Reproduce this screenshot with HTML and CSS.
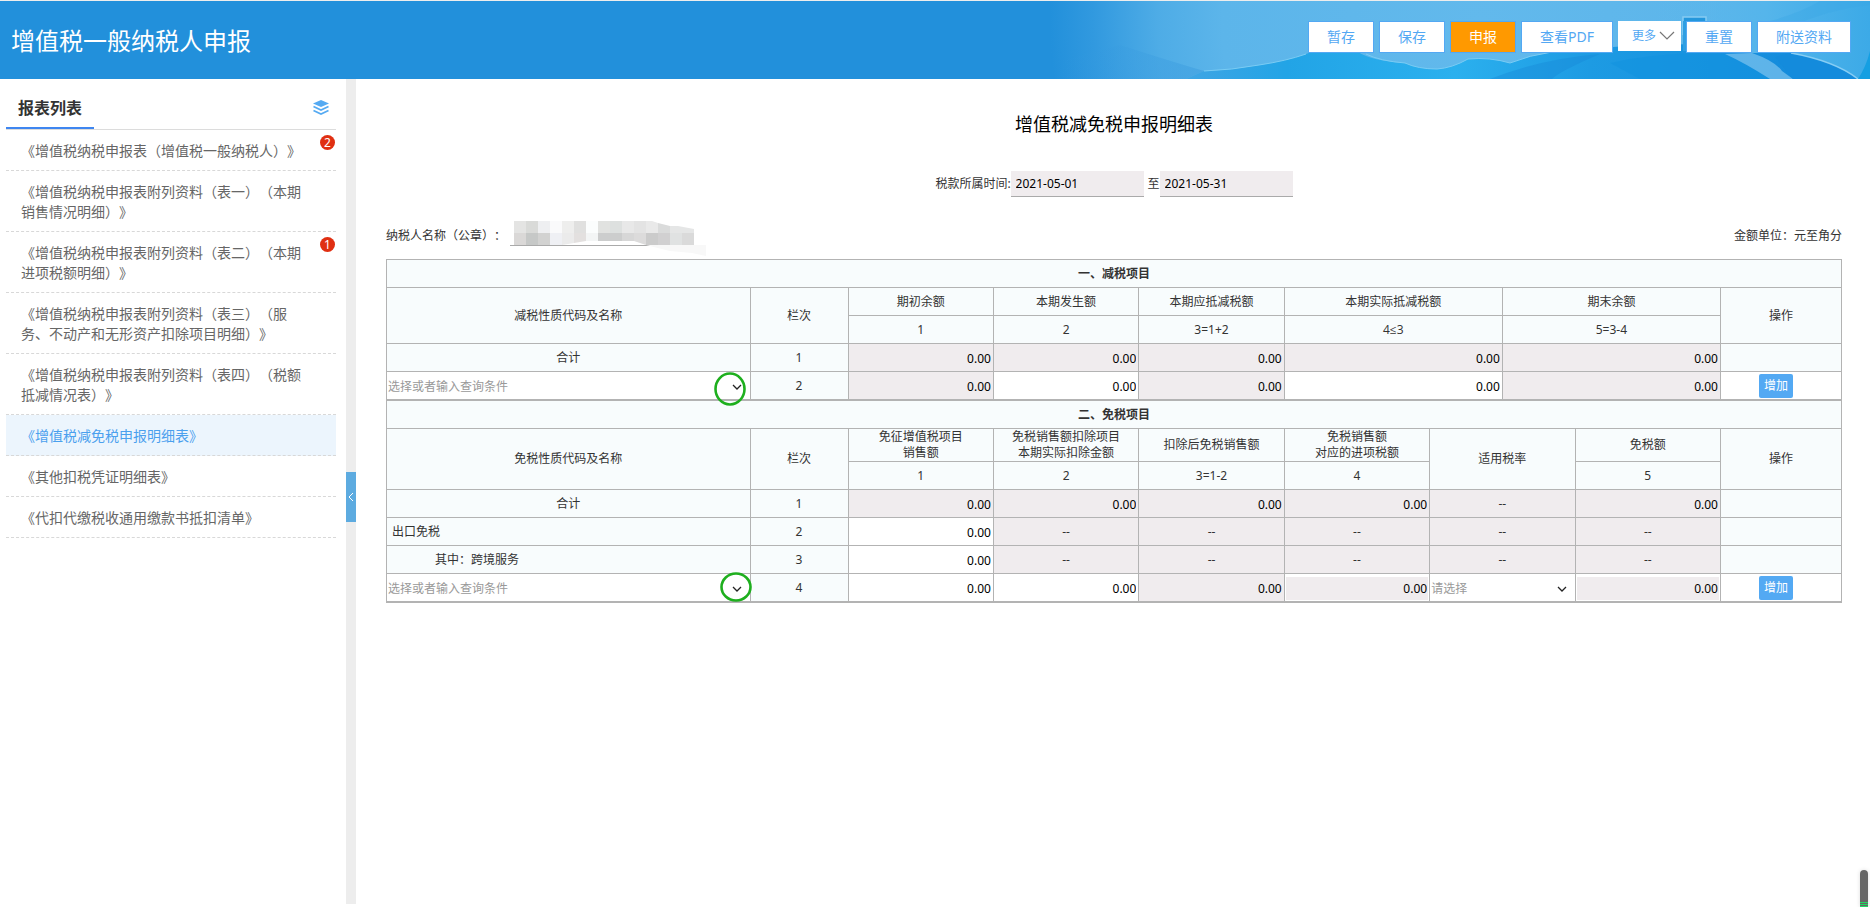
FILE: index.html
```html
<!DOCTYPE html>
<html lang="zh-CN">
<head>
<meta charset="utf-8">
<title>增值税一般纳税人申报</title>
<link rel="stylesheet" href="styles.css">
</head>
<body>
<header class="topbar">
  <svg class="topbar-art" viewBox="0 0 870 78" aria-hidden="true">
    <defs>
      <radialGradient id="sky" gradientUnits="userSpaceOnUse" cx="480" cy="20" r="430">
        <stop offset="0" stop-color="#62b9ec"/>
        <stop offset="0.6" stop-color="#5cb5ea"/>
        <stop offset="0.75" stop-color="#4eace6"/>
        <stop offset="0.9" stop-color="#3199df"/>
        <stop offset="1" stop-color="#2290db"/>
      </radialGradient>
      <linearGradient id="east" x1="0" x2="1" y1="0" y2="0">
        <stop offset="0.75" stop-color="#5cb8ec" stop-opacity="0"/>
        <stop offset="0.88" stop-color="#55b5eb"/>
        <stop offset="1" stop-color="#3caae7"/>
      </linearGradient>
      <linearGradient id="sea" x1="0" x2="1" y1="0" y2="0">
        <stop offset="0" stop-color="#3fa5e4"/>
        <stop offset="0.15" stop-color="#22a4e6"/>
        <stop offset="0.4" stop-color="#2bb0ee"/>
        <stop offset="0.6" stop-color="#1d9be3"/>
        <stop offset="1" stop-color="#1287da"/>
      </linearGradient>
      <linearGradient id="slope" x1="0" x2="1" y1="0" y2="0">
        <stop offset="0" stop-color="#3197de" stop-opacity="0"/>
        <stop offset="1" stop-color="#3f9fe0"/>
      </linearGradient>
    </defs>
    <rect width="870" height="78" fill="url(#sky)"/>
    <rect width="870" height="78" fill="url(#east)"/>
    <path d="M120 44 Q170 60 204 70 L186 78 H60 V60Z" fill="url(#slope)" opacity=".6"/>
    <path d="M186 78 L204 70 Q232 69 259 64 Q286 60 306 53 Q330 42 358 51 Q372 60 405 62 Q418 68 437 68 Q452 67 468 58 Q490 56 510 62 Q530 54 560 50 L640 44 Q700 40 740 52 L791 52 Q830 60 858 78Z" fill="url(#sea)"/>
    <path d="M204 70 Q232 69 259 64 Q286 60 306 53 M366 53 Q380 60 405 62 Q418 68 437 68 Q452 67 468 58 Q490 56 510 62 Q530 54 552 51" fill="none" stroke="#7accf4" stroke-width="1"/>
    <path d="M490 78 Q540 58 600 53 Q560 70 552 78Z" fill="#1687d8" opacity=".4"/>
    <path d="M610 62 Q660 50 725 53 Q750 64 770 78 H640Z" fill="#1392e0" opacity=".6"/>
    <path d="M725 53 L752 52 Q775 60 782 70 L793 78 H770 Q745 62 725 53Z" fill="#8fcdf2" opacity=".6"/>
    <path d="M791 52 Q835 60 858 78 H793 L775 56Z" fill="#148bdc"/>
    <path d="M791 52 Q835 60 858 78" fill="none" stroke="#86cdf4" stroke-width="1.5"/>
    <path d="M683 34 V16 H706 V24" fill="#2497dc" stroke="#86cbf2" stroke-width="1.5"/>
    <path d="M683 50 V20 H706 L700 50Z" fill="#2f9fe2"/>
    <path d="M790 26 Q830 8 870 4 V0 H820 Q800 12 770 20Z" fill="#3aa6e6" opacity=".35"/>
    <path d="M858 78 Q866 66 870 50 V78Z" fill="#159fe2"/>
  </svg>
  <h1 class="topbar-title">增值税一般纳税人申报</h1>
  <div class="actions">
    <button class="btn" type="button">暂存</button>
    <button class="btn" type="button">保存</button>
    <button class="btn btn-primary" type="button">申报</button>
    <button class="btn" type="button">查看PDF</button>
    <button class="btn-more" type="button">更多<svg width="16" height="10" viewBox="0 0 16 10" aria-hidden="true"><path d="M1 1 L8 8 L15 1" fill="none" stroke="#777" stroke-width="1.2"/></svg></button>
    <button class="btn" type="button">重置</button>
    <button class="btn" type="button">附送资料</button>
  </div>
</header>

<div class="page">
  <aside class="sidebar">
    <div class="side-head">
      <h2 class="side-title">报表列表</h2>
      <svg class="layers" width="16" height="16" viewBox="0 0 16 16" aria-hidden="true">
        <path d="M8 0 L16 3.6 L8 7 L0 3.6Z" fill="#55aaf2"/>
        <path d="M0.5 6.6 L8 10 L15.5 6.6 M0.5 10.6 L8 14 L15.5 10.6" fill="none" stroke="#55aaf2" stroke-width="1.7"/>
      </svg>
    </div>
    <nav class="side-list">
      <a class="item" href="#">《增值税纳税申报表（增值税一般纳税人）》<span class="badge">2</span></a>
      <a class="item" href="#">《增值税纳税申报表附列资料（表一）（本期销售情况明细）》</a>
      <a class="item" href="#">《增值税纳税申报表附列资料（表二）（本期进项税额明细）》<span class="badge">1</span></a>
      <a class="item" href="#">《增值税纳税申报表附列资料（表三）（服务、不动产和无形资产扣除项目明细）》</a>
      <a class="item" href="#">《增值税纳税申报表附列资料（表四）（税额抵减情况表）》</a>
      <a class="item active" href="#">《增值税减免税申报明细表》</a>
      <a class="item" href="#">《其他扣税凭证明细表》</a>
      <a class="item" href="#">《代扣代缴税收通用缴款书抵扣清单》</a>
    </nav>
  </aside>
  <div class="gutter">
    <button class="collapse" type="button" aria-label="收起"><svg width="6" height="10" viewBox="0 0 6 10" aria-hidden="true"><path d="M5 1 L1 5 L5 9" fill="none" stroke="#fff" stroke-width="1"/></svg></button>
  </div>

  <main class="main">
    <h2 class="form-title">增值税减免税申报明细表</h2>
    <div class="period">
      <label for="from">税款所属时间:</label>
      <input class="date" id="from" value="2021-05-01" readonly>
      <label class="to" for="until">至</label>
      <input class="date" id="until" value="2021-05-31" readonly>
    </div>
    <div class="meta">
      <div class="payer">
        <span>纳税人名称（公章）：</span>
        <svg class="mosaic" width="200" height="36" viewBox="0 0 200 36" aria-hidden="true">
          <path d="M0 24.5 H144" stroke="#aaa"/>
          <g shape-rendering="crispEdges">
            <path d="M4 0h12v12h-12z" fill="#e4e4e3"/><path d="M16 0h12v12h-12z" fill="#d9dad8"/><path d="M28 0h12v12h-12z" fill="#eeeff1"/><path d="M40 0h12v12h-12z" fill="#fafafb"/><path d="M52 0h12v12h-12z" fill="#eeeeed"/><path d="M64 0h12v12h-12z" fill="#e0e0df"/><path d="M76 0h12v12h-12z" fill="#fbfdfd"/><path d="M88 0h12v12h-12z" fill="#e1e2e0"/><path d="M100 0h12v12h-12z" fill="#dde0df"/><path d="M112 0h12v12h-12z" fill="#e8e8e8"/><path d="M124 0h12v12h-12z" fill="#e3e3e3"/>
            <path d="M4 12h12v12h-12z" fill="#dad8d7"/><path d="M16 12h12v12h-12z" fill="#c6c8c7"/><path d="M28 12h12v12h-12z" fill="#d2d2d1"/><path d="M40 12h12v12h-12z" fill="#eff0f4"/><path d="M76 12h12v8h-12z" fill="#f3f5f5"/><path d="M88 12h24v8h-24z" fill="#cccdcd"/><path d="M112 12h12v8h-12z" fill="#d7d7d7"/>
          </g>
          <path d="M52 12h12v10l-12 2z" fill="#ebebeb"/><path d="M64 12h12v8l-12 2z" fill="#e3e0df"/>
          <path d="M124 12h12v12l-12-4z" fill="#dcdbdb"/>
          <path d="M136 0h6l6 2v10h-12z" fill="#e9e9e9"/><path d="M148 2l12 3v8h-12z" fill="#dadbdb"/><path d="M160 5h8l16 3v5h-24z" fill="#e5e6e6"/>
          <path d="M136 12h12v12h-12z" fill="#cbcbcb"/><path d="M148 12h12v12h-12z" fill="#d1d0d1"/><path d="M160 12h12v12h-12z" fill="#e0e2e2"/><path d="M172 12h12v12h-12z" fill="#dadada"/>
          <path d="M136 24h60v11l-14-3-22-2z" fill="#f8f8f8"/>
        </svg>
      </div>
      <span>金额单位：元至角分</span>
    </div>

    <div class="sheet">
      <table class="grid">
        <colgroup><col class="c-name"><col class="c-line"><col class="c-num"><col class="c-num"><col class="c-num"><col class="c-wide"><col class="c-wide"><col class="c-op"></colgroup>
        <tr><th class="section" colspan="8">一、减税项目</th></tr>
        <tr><th rowspan="2">减税性质代码及名称</th><th rowspan="2">栏次</th><th>期初余额</th><th>本期发生额</th><th>本期应抵减税额</th><th>本期实际抵减税额</th><th>期末余额</th><th rowspan="2">操作</th></tr>
        <tr><th>1</th><th>2</th><th>3=1+2</th><th class="latin">4≤3</th><th>5=3-4</th></tr>
        <tr><td>合计</td><td>1</td>
          <td class="off"><input class="num" value="0.00" aria-label="合计 期初余额" readonly></td>
          <td class="off"><input class="num" value="0.00" aria-label="合计 本期发生额" readonly></td>
          <td class="off"><input class="num" value="0.00" aria-label="合计 本期应抵减税额" readonly></td>
          <td class="off"><input class="num" value="0.00" aria-label="合计 本期实际抵减税额" readonly></td>
          <td class="off"><input class="num" value="0.00" aria-label="合计 期末余额" readonly></td>
          <td></td></tr>
        <tr><td class="edit"><div class="combo"><input class="query" placeholder="选择或者输入查询条件" aria-label="减税性质代码及名称"><svg class="caret" width="10" height="6" viewBox="0 0 10 6" aria-hidden="true"><path d="M1 1 L5 5 L9 1" fill="none" stroke="#222" stroke-width="1.3"/></svg><svg class="ring ring-tall" viewBox="0 0 32 34" aria-hidden="true"><ellipse cx="16" cy="17" rx="14.5" ry="15.5" fill="none" stroke="#1eaf1e" stroke-width="2.6"/></svg></div></td><td>2</td>
          <td class="off"><input class="num" value="0.00" aria-label="期初余额" readonly></td>
          <td class="edit"><input class="num" value="0.00" aria-label="本期发生额"></td>
          <td class="off"><input class="num" value="0.00" aria-label="本期应抵减税额" readonly></td>
          <td class="edit"><input class="num" value="0.00" aria-label="本期实际抵减税额"></td>
          <td class="off"><input class="num" value="0.00" aria-label="期末余额" readonly></td>
          <td class="edit op"><button class="add" type="button">增加</button></td></tr>
      </table>
    </div>
    <div class="sheet">
      <table class="grid">
        <colgroup><col class="c-name"><col class="c-line"><col class="c-num"><col class="c-num"><col class="c-num"><col class="c-num"><col class="c-num"><col class="c-num"><col class="c-op"></colgroup>
        <tr><th class="section" colspan="9">二、免税项目</th></tr>
        <tr class="tall"><th rowspan="2">免税性质代码及名称</th><th rowspan="2">栏次</th><th>免征增值税项目<br>销售额</th><th>免税销售额扣除项目<br>本期实际扣除金额</th><th>扣除后免税销售额</th><th>免税销售额<br>对应的进项税额</th><th rowspan="2">适用税率</th><th>免税额</th><th rowspan="2">操作</th></tr>
        <tr><th>1</th><th>2</th><th>3=1-2</th><th>4</th><th>5</th></tr>
        <tr><td>合计</td><td>1</td>
          <td class="off"><input class="num" value="0.00" aria-label="合计 免征增值税项目销售额" readonly></td>
          <td class="off"><input class="num" value="0.00" aria-label="合计 本期实际扣除金额" readonly></td>
          <td class="off"><input class="num" value="0.00" aria-label="合计 扣除后免税销售额" readonly></td>
          <td class="off"><input class="num" value="0.00" aria-label="合计 对应的进项税额" readonly></td>
          <td class="off">--</td>
          <td class="off"><input class="num" value="0.00" aria-label="合计 免税额" readonly></td>
          <td></td></tr>
        <tr><td class="left">出口免税</td><td>2</td>
          <td class="edit"><input class="num" value="0.00" aria-label="出口免税 销售额"></td>
          <td class="off">--</td><td class="off">--</td><td class="off">--</td><td class="off">--</td><td class="off">--</td><td></td></tr>
        <tr><td class="left sub">其中：跨境服务</td><td>3</td>
          <td class="edit"><input class="num" value="0.00" aria-label="跨境服务 销售额"></td>
          <td class="off">--</td><td class="off">--</td><td class="off">--</td><td class="off">--</td><td class="off">--</td><td></td></tr>
        <tr><td class="edit"><div class="combo"><input class="query" placeholder="选择或者输入查询条件" aria-label="免税性质代码及名称"><svg class="caret" width="10" height="6" viewBox="0 0 10 6" aria-hidden="true"><path d="M1 1 L5 5 L9 1" fill="none" stroke="#222" stroke-width="1.3"/></svg><svg class="ring ring-round" viewBox="0 0 32 30" aria-hidden="true"><ellipse cx="16" cy="15" rx="14.5" ry="13.5" fill="none" stroke="#1eaf1e" stroke-width="2.6"/></svg></div></td><td>4</td>
          <td class="edit"><input class="num" value="0.00" aria-label="免征增值税项目销售额"></td>
          <td class="edit"><input class="num" value="0.00" aria-label="本期实际扣除金额"></td>
          <td class="off"><input class="num" value="0.00" aria-label="扣除后免税销售额" readonly></td>
          <td class="edit"><input class="num inset" value="0.00" aria-label="对应的进项税额" readonly></td>
          <td class="edit"><div class="combo"><select class="pick" aria-label="适用税率"><option>请选择</option></select><svg class="caret" width="10" height="6" viewBox="0 0 10 6" aria-hidden="true"><path d="M1 1 L5 5 L9 1" fill="none" stroke="#222" stroke-width="1.3"/></svg></div></td>
          <td class="edit"><input class="num inset" value="0.00" aria-label="免税额" readonly></td>
          <td class="edit op"><button class="add" type="button">增加</button></td></tr>
      </table>
    </div>
  </main>
</div>
<div class="float-tab" aria-hidden="true"></div>
</body>
</html>
```
FILE: styles.css
```css
* { box-sizing: border-box; }
html, body { height: 100%; }
body {
  margin: 0;
  display: flex;
  flex-direction: column;
  overflow: hidden;
  background: #fff;
  color: #333;
  font: 12px/16px "Noto Sans", "Noto Sans CJK SC", sans-serif;
  text-spacing-trim: space-all;
}
button, input, select { font: inherit; color: inherit; margin: 0; border-radius: 0; }
h1, h2 { margin: 0; font-weight: 400; }

.topbar {
  position: relative;
  flex: none;
  display: flex;
  justify-content: space-between;
  align-items: flex-start;
  height: 79px;
  padding: 0 19px 0 11px;
  background: #2290db;
  border-top: 1px solid #ededed;
}
.topbar-art { position: absolute; right: 0; top: 0; width: 870px; height: 78px; }
.topbar-title { color: #fff; font-size: 24px; line-height: 80px; }
.actions { position: relative; display: flex; align-items: flex-start; gap: 5px; padding-top: 20px; }
.btn {
  height: 32px;
  padding: 0 18px;
  border: 1px solid #53a8f3;
  background: #fff;
  color: #53a8f3;
  font-size: 14px;
  line-height: 28px;
}
.btn-primary { background: #ff9900; color: #fff; }
.btn-more {
  display: flex;
  align-items: center;
  gap: 3px;
  height: 30px;
  padding: 0 6px 0 14px;
  border: 0;
  background: #fff;
  color: #53a8f3;
}

.page { flex: 1; display: flex; min-height: 0; padding-bottom: 3px; }
.sidebar { flex: none; width: 346px; padding: 9px 10px 0 6px; }
.side-head {
  display: flex;
  justify-content: space-between;
  align-items: center;
  height: 42px;
  padding-right: 7px;
  border-bottom: 1px solid #dcdcdc;
}
.side-title {
  padding: 1px 12px 0;
  border-bottom: 2px solid #3f86f0;
  font-size: 16px;
  font-weight: 700;
  line-height: 38px;
}
.layers { margin-bottom: 2px; }
.item {
  position: relative;
  display: block;
  padding: 11px 25px 9px 15px;
  border-bottom: 1px dashed #d8d8d8;
  color: #666;
  font-size: 14px;
  line-height: 20px;
  text-decoration: none;
}
.item.active { background: #ecf5fd; color: #4aa0ee; }
.badge {
  position: absolute;
  top: 5px;
  right: 1px;
  width: 15px;
  height: 15px;
  border-radius: 50%;
  background: #e02f12;
  color: #fff;
  font-size: 12px;
  line-height: 15px;
  text-align: center;
}
.gutter { flex: none; width: 10px; background: #ededed; display: flex; flex-direction: column; justify-content: center; padding-top: 10px; }
.collapse {
  display: flex;
  align-items: center;
  justify-content: center;
  width: 10px;
  height: 50px;
  padding: 0;
  border: 0;
  background: #5dabe0;
}

.main { flex: 1; min-width: 0; padding: 33px 28px 0 30px; }
.form-title { color: #000; font-size: 18px; line-height: 24px; text-align: center; }
.period { display: flex; justify-content: center; align-items: center; margin-top: 35px; }
.date {
  width: 133px;
  height: 26px;
  padding: 0 5px;
  border: 0;
  border-bottom: 1px solid #aaa;
  background: #f0ecee;
  color: #000;
}
.to { padding-left: 4px; }
.meta { display: flex; justify-content: space-between; align-items: flex-start; height: 62px; padding-top: 31px; }
.payer { display: flex; gap: 4px; }
.mosaic { display: block; margin-top: -7px; }

.sheet { border-bottom: 1px solid #b3b3b3; }
.sheet + .sheet { margin-top: -1px; }
.grid { width: 100%; table-layout: fixed; border-collapse: collapse; background: #f8fcfd; }
.c-name { width: 25%; }
.c-line { width: 98px; }
.c-num { width: 10%; }
.c-wide { width: 15%; }
.c-op { width: 121px; }
.grid th, .grid td {
  height: 28px;
  padding: 1px 0 0;
  border: 1px solid #b3b3b3;
  font-weight: 400;
  text-align: center;
}
.grid .tall th { height: 33px; padding: 0; }
.grid th.section { font-weight: 700; }
.grid th.latin { font-family: "Open Sans", "Noto Sans", sans-serif; }
.grid td.left { padding-left: 5px; text-align: left; }
.grid td.sub { padding-left: 48px; }
.grid .off { background: #f0ecee; }
.grid .edit { background: #fff; }
.num {
  display: block;
  width: 100%;
  height: 26px;
  padding: 0 2px;
  border: 0;
  background: transparent;
  color: #000;
  text-align: right;
}
.num.inset { height: 25px; border: 1px solid #fff; padding: 0 1px; background: #f0ecee; }
.combo { position: relative; display: flex; align-items: center; }
.query, .pick {
  width: 100%;
  height: 26px;
  padding: 1px 1px 0;
  border: 0;
  background: transparent;
  color: #999;
  appearance: none;
}
.query::placeholder { color: #999; opacity: 1; }
.caret { position: absolute; right: 8px; top: 11px; pointer-events: none; }
.ring { position: absolute; pointer-events: none; z-index: 1; }
.ring-tall { width: 32px; height: 34px; right: 4px; top: -1px; }
.ring-round { width: 32px; height: 30px; right: -2px; top: -3px; }
.grid td.op { padding-right: 10px; }
.add {
  width: 34px;
  height: 24px;
  padding: 0;
  border: 0;
  border-radius: 2px;
  background: #53a9f3;
  color: #fff;
  display: block;
  margin: 0 auto;
}
.float-tab {
  position: absolute;
  right: 2px;
  bottom: 0;
  width: 8px;
  height: 37px;
  border-radius: 4px 4px 0 0;
  background: linear-gradient(#666 32px, #20d860 32px 33px, #666 33px 34px, #20d860 34px 35px, #666 35px 36px, #20d860 36px);
  box-shadow: 0 0 4px #ddd;
}
```
